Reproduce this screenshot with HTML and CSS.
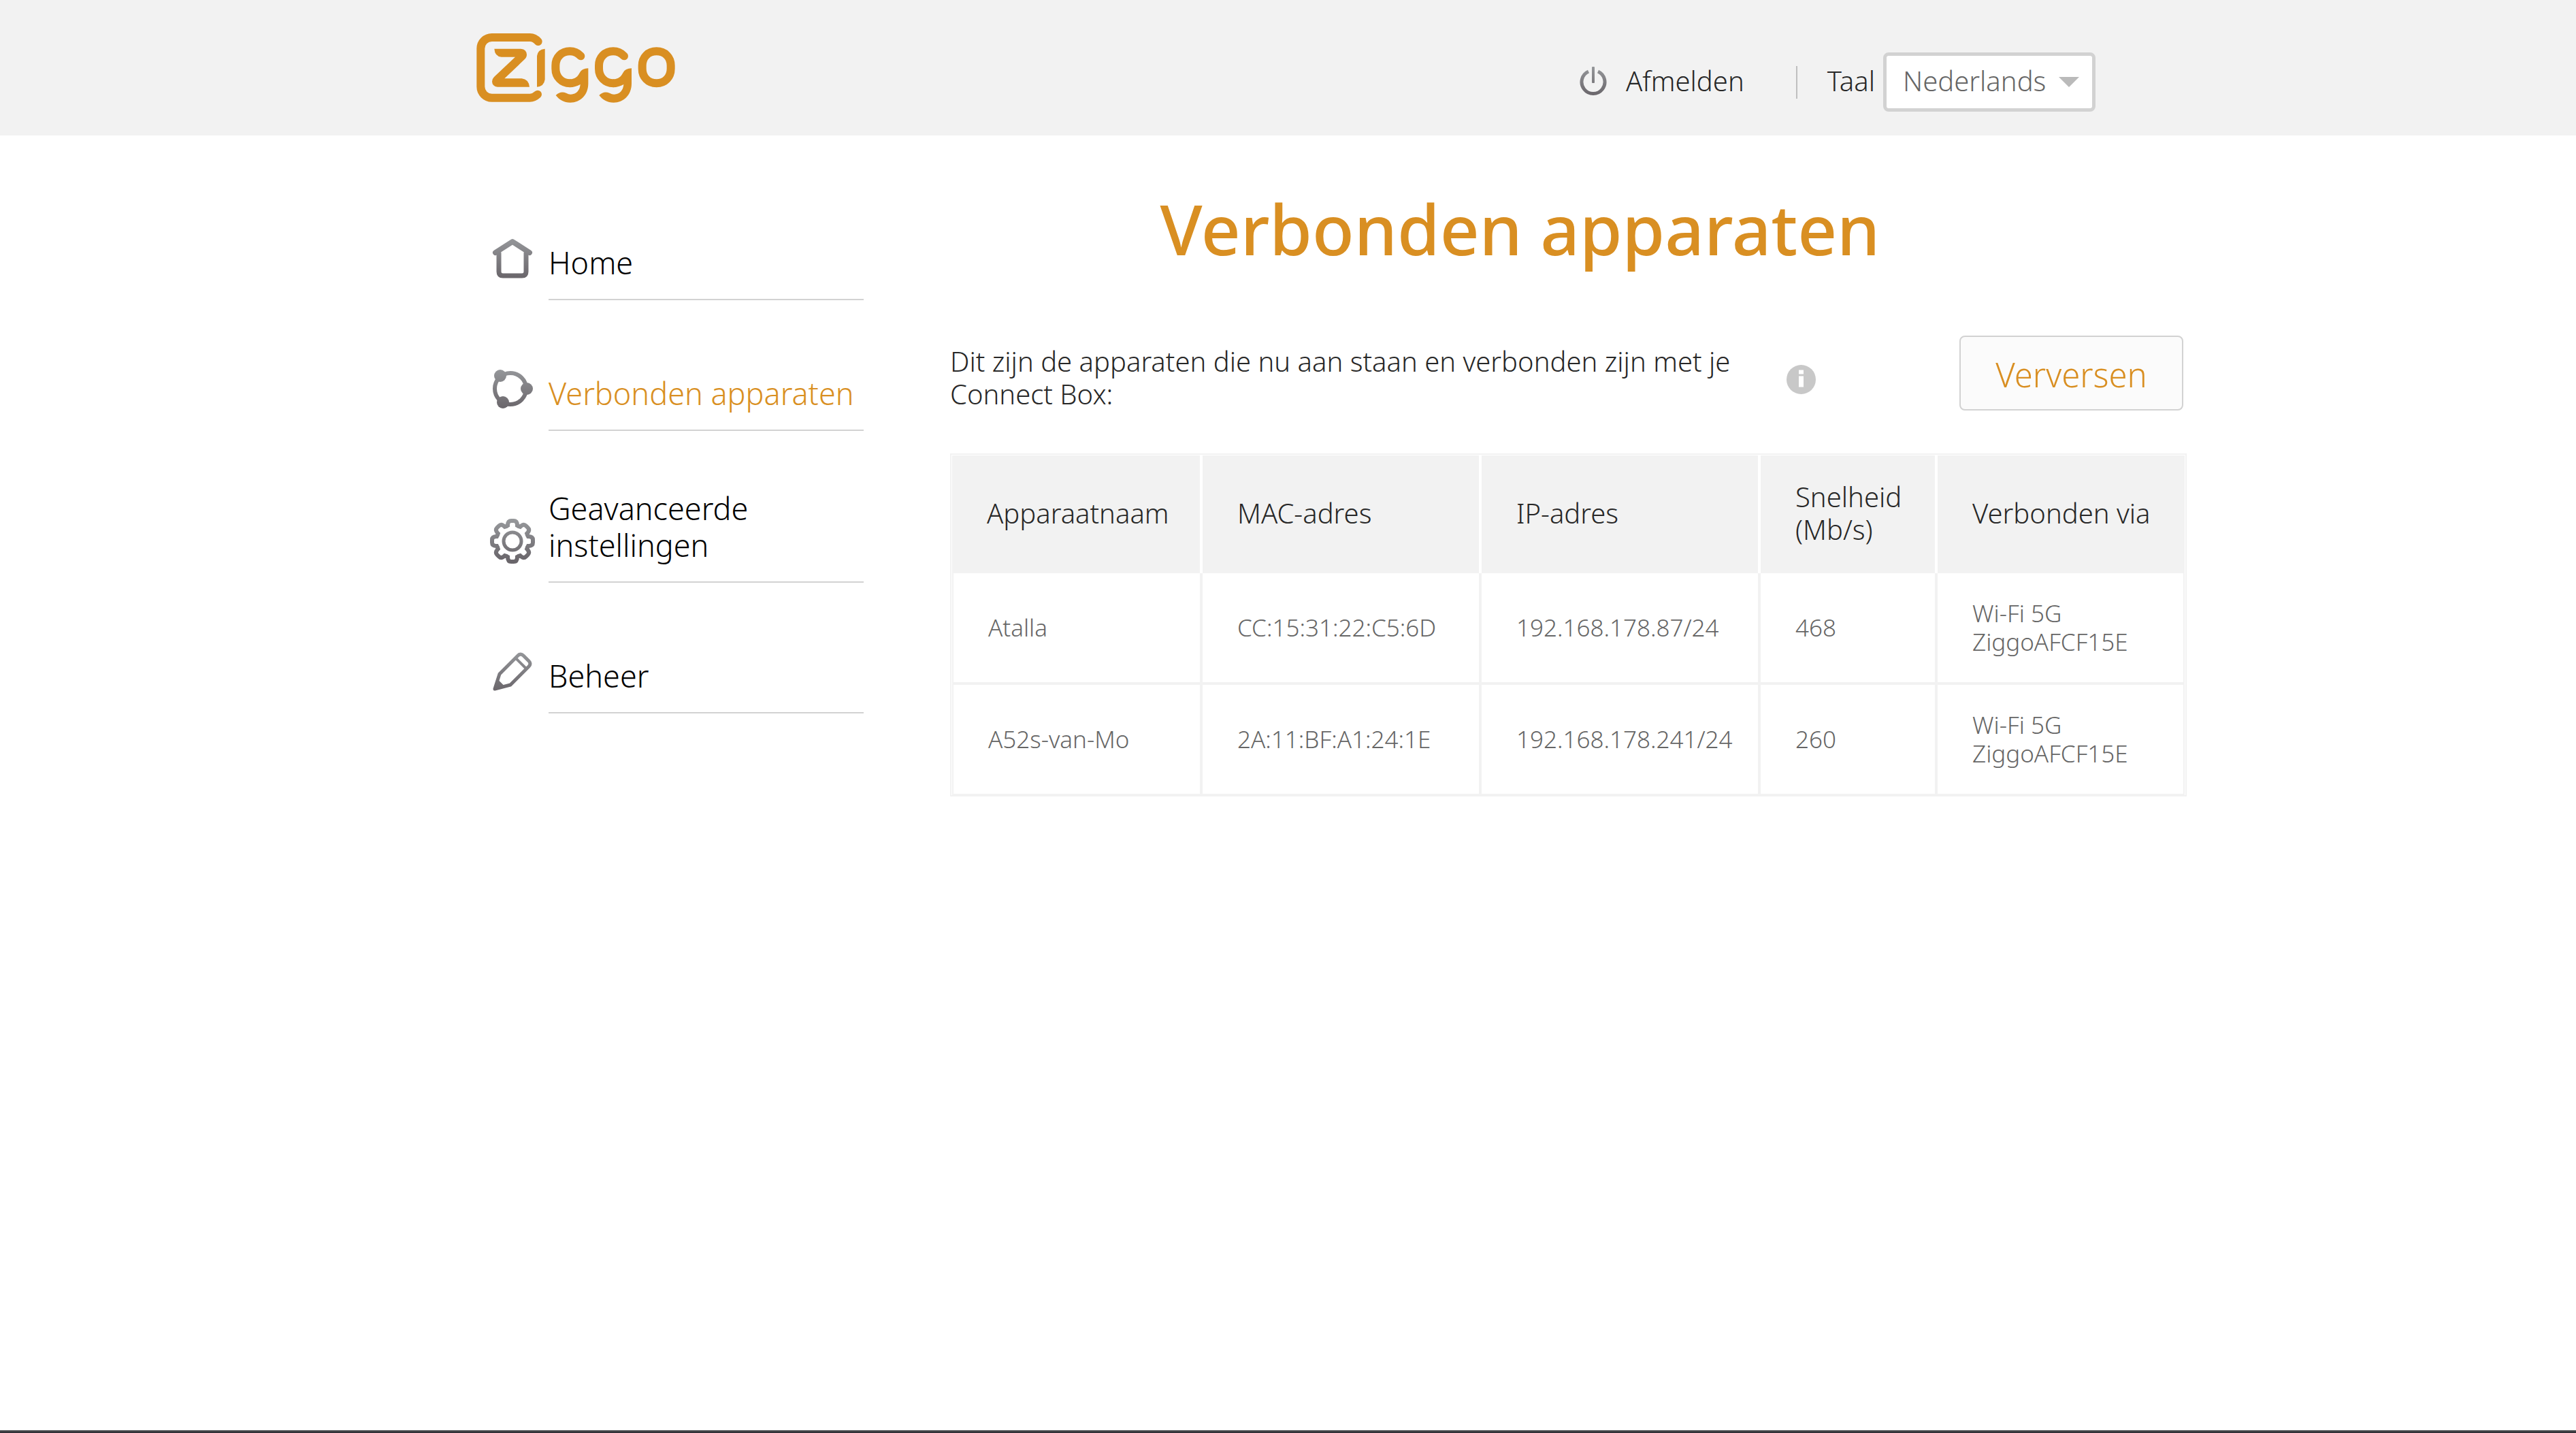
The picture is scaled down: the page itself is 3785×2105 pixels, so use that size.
FILE: index.html
```html
<!DOCTYPE html>
<html lang="nl">
<head>
<meta charset="utf-8">
<meta name="viewport" content="width=device-width, initial-scale=1">
<title>Verbonden apparaten - Ziggo</title>
<link rel="stylesheet" href="styles.css">
</head>
<body>
<svg class="defs" width="0" height="0" aria-hidden="true">
  <defs>
    <linearGradient id="metal" gradientUnits="userSpaceOnUse" x1="0" y1="2" x2="0" y2="62">
      <stop offset="0" stop-color="#96989b"/>
      <stop offset="1" stop-color="#69656a"/>
    </linearGradient>
    <linearGradient id="metal-small" gradientUnits="userSpaceOnUse" x1="0" y1="0" x2="0" y2="44">
      <stop offset="0" stop-color="#96989b"/>
      <stop offset="1" stop-color="#69656a"/>
    </linearGradient>
    <path id="tooth" d="M-9 -22L-7 -23Q-7 -30 -2 -30H2Q7 -30 7 -23L9 -22"/>
    <mask id="gear" maskUnits="userSpaceOnUse" x="0" y="0" width="66" height="66">
      <g transform="translate(33 33)" fill="none" stroke="#fff" stroke-width="6" stroke-linecap="round">
        <use href="#tooth"/>
        <use href="#tooth" transform="rotate(45)"/>
        <use href="#tooth" transform="rotate(90)"/>
        <use href="#tooth" transform="rotate(135)"/>
        <use href="#tooth" transform="rotate(180)"/>
        <use href="#tooth" transform="rotate(225)"/>
        <use href="#tooth" transform="rotate(270)"/>
        <use href="#tooth" transform="rotate(315)"/>
        <circle r="13" stroke-width="5"/>
      </g>
    </mask>
  </defs>
</svg>

<header class="site-header">
  <div class="container header-inner">
    <a class="logo" href="#" aria-label="Ziggo">
      <svg width="292" height="102" viewBox="60 54 876 306" fill="#d98f22" aria-hidden="true">
        <g fill="none" stroke="#d98f22" stroke-width="36" stroke-linecap="round">
          <path d="M332 90Q316 72 296 72H128A49 49 0 0 0 79 121V289A49 49 0 0 0 128 338H296Q314 338 330 323"/>
          <path id="bowl" d="M520 154Q500 133 472 133C435 133 409 160 409 196V210C409 246 436 274 472 274"/>
          <use href="#bowl" x="191"/>
          <path d="M854 133C892 133 917 160 917 196V210C917 246 892 274 854 274C816 274 791 246 791 210V196C791 160 816 133 854 133Z"/>
        </g>
        <path d="M139 122H256Q281 124 282 148Q282 160 272 169L184 253H260Q290 256 294 290H153Q130 288 129 266Q129 255 138 246L231 158H170Q141 155 139 122Z"/>
        <path d="M362 122V257Q358 287 327 290V154Q330 125 362 122Z"/>
        <path id="tail" d="M553 208V275C553 325 518 359 474 359C446 359 425 347 410 327Q430 306 456 317Q466 323 476 323C501 322 516 305 518 279Q497 291 472 292V256C495 256 508 243 515 228Q525 208 553 208Z"/>
        <use href="#tail" x="191"/>
      </svg>
    </a>
    <div class="user-bar">
      <a class="logout" href="#">
        <svg width="40" height="44" viewBox="0 0 40 44" fill="none" stroke="url(#metal-small)" stroke-linecap="round" aria-hidden="true">
          <path d="M13 8A17 17 0 1 0 27 8" stroke-width="5" stroke-linecap="butt"/>
          <path d="M19 2L21 2L21 24L19 24Z" stroke-width="2" stroke-linejoin="round" fill="url(#metal-small)"/>
        </svg>
        <span class="bar-text">Afmelden</span>
      </a>
      <span class="divider"></span>
      <div class="language">
        <label class="bar-text" for="taal">Taal</label>
        <span class="select-wrap">
          <select id="taal"><option>Nederlands</option><option>English</option></select>
        </span>
      </div>
    </div>
  </div>
</header>

<main class="container layout">
  <nav class="side-nav" aria-label="Hoofdmenu">
    <a class="nav-item" href="#">
      <svg width="66" height="66" viewBox="0 0 66 66" fill="none" stroke="url(#metal)" stroke-width="6" stroke-linecap="round" stroke-linejoin="round" aria-hidden="true">
        <path d="M8 24L33 8L58 24" stroke-width="8"/>
        <path d="M13 25V52Q13 58 19 58H47Q53 58 53 52V25" stroke-width="7"/>
      </svg>
      <span class="nav-label">Home</span>
    </a>
    <a class="nav-item is-active" href="#" aria-current="page">
      <svg width="66" height="66" viewBox="0 0 66 66" fill="url(#metal)" aria-hidden="true">
        <circle cx="30" cy="32" r="23" fill="none" stroke="url(#metal)" stroke-width="6"/>
        <circle cx="15" cy="13" r="9"/>
        <circle cx="54" cy="32" r="9"/>
        <circle cx="19" cy="52" r="9"/>
      </svg>
      <span class="nav-label">Verbonden apparaten</span>
    </a>
    <a class="nav-item" href="#">
      <svg width="66" height="66" viewBox="0 0 66 66" aria-hidden="true">
        <rect width="66" height="66" fill="url(#metal)" mask="url(#gear)"/>
      </svg>
      <span class="nav-label">Geavanceerde<br>instellingen</span>
    </a>
    <a class="nav-item" href="#">
      <svg width="66" height="66" viewBox="0 0 66 66" fill="none" stroke="url(#metal)" stroke-width="5" stroke-linejoin="round" aria-hidden="true">
        <path d="M7 58L14 36L41 9Q45 5 49 9L57 17Q61 21 57 25L30 52Z"/>
        <path d="M38 13L53 28" stroke-width="4"/>
        <path d="M11 45L20 54L7 58Z" fill="url(#metal)" stroke-width="2"/>
      </svg>
      <span class="nav-label">Beheer</span>
    </a>
  </nav>

  <section class="content">
    <h1>Verbonden apparaten</h1>
    <div class="intro-row">
      <p class="intro">Dit zijn de apparaten die nu aan staan en verbonden zijn met je Connect Box:</p>
      <button class="info" type="button" aria-label="Informatie">
        <svg width="43" height="43" viewBox="0 0 86 86" aria-hidden="true">
          <circle cx="43" cy="43" r="43" fill="#c8c8c8"/>
          <path d="M36 15H50V27H36ZM36 33H50V65H36Z" fill="#fff"/>
        </svg>
      </button>
      <button class="refresh" type="button">Verversen</button>
    </div>
    <table class="devices">
      <colgroup>
        <col class="col-name"><col class="col-address"><col class="col-address"><col class="col-speed"><col>
      </colgroup>
      <thead>
        <tr>
          <th scope="col">Apparaatnaam</th>
          <th scope="col">MAC-adres</th>
          <th scope="col">IP-adres</th>
          <th scope="col">Snelheid (Mb/s)</th>
          <th scope="col">Verbonden via</th>
        </tr>
      </thead>
      <tbody>
        <tr>
          <td>Atalla</td>
          <td>CC:15:31:22:C5:6D</td>
          <td>192.168.178.87/24</td>
          <td>468</td>
          <td>Wi-Fi 5G ZiggoAFCF15E</td>
        </tr>
        <tr>
          <td>A52s-van-Mo</td>
          <td>2A:11:BF:A1:24:1E</td>
          <td>192.168.178.241/24</td>
          <td>260</td>
          <td>Wi-Fi 5G ZiggoAFCF15E</td>
        </tr>
      </tbody>
    </table>
  </section>
</main>

<footer class="site-footer"></footer>
</body>
</html>
```
FILE: styles.css
```css
*,
*::before,
*::after {
  box-sizing: border-box;
}

body {
  margin: 0;
  min-height: 100vh;
  display: flex;
  flex-direction: column;
  background: #fff;
  color: #272727;
  font-family: "Noto Sans", "Open Sans", sans-serif;
  font-weight: 300;
  font-size: 40px;
  line-height: 48px;
}

a {
  color: inherit;
  text-decoration: none;
}

button,
select {
  font: inherit;
}

.defs {
  position: absolute;
}

.container {
  width: 100%;
  max-width: 2385px;
  margin: 0 auto;
}

/* Header */

.site-header {
  background: #f2f2f2;
}

.header-inner {
  min-height: 199px;
  padding-right: 6px;
  display: flex;
  align-items: center;
  justify-content: space-between;
}

.logo svg {
  display: block;
}

.user-bar {
  display: flex;
  align-items: center;
  padding-top: 42px;
}

.logout {
  display: flex;
  align-items: center;
  gap: 28px;
}

.logout svg {
  margin-bottom: 4px;
}

.bar-text {
  padding-bottom: 4px;
}

.divider {
  width: 2px;
  height: 48px;
  margin: 0 44px 0 76px;
  background: #bfbfbf;
}

.language {
  display: flex;
  align-items: center;
  gap: 12px;
}

.select-wrap {
  position: relative;
}

.select-wrap::after {
  content: "";
  position: absolute;
  top: 36px;
  right: 24px;
  border: solid transparent;
  border-width: 15px 15px 0;
  border-top-color: #bababa;
  pointer-events: none;
}

.select-wrap select {
  display: block;
  width: 312px;
  height: 87px;
  padding: 0 60px 4px 24px;
  appearance: none;
  border: 5px solid #d2d2d2;
  border-radius: 8px;
  background: #fff;
  color: #666;
}

/* Page body */

.layout {
  flex: 1;
  display: flex;
  align-items: flex-start;
  gap: 127px;
  padding-left: 20px;
}

.side-nav {
  flex: none;
  width: 549px;
  padding-top: 135px;
  display: grid;
  gap: 85px;
  color: #000;
  font-size: 45px;
  line-height: 54px;
}

.nav-item {
  display: flex;
  align-items: flex-end;
  gap: 20px;
}

.nav-item svg {
  flex: none;
  margin-bottom: 28px;
}

.nav-label {
  flex: 1;
  min-height: 107px;
  padding: 2px 0 26px;
  border-bottom: 2px solid #d2d2d2;
  align-content: end;
  white-space: nowrap;
}

.is-active {
  color: #d98f22;
}

.content {
  flex: 1;
  margin-right: -128px;
  padding-top: 75px;
}

h1 {
  margin: 0 0 95px;
  padding-right: 142px;
  color: #d98f22;
  font-size: 101px;
  font-weight: 500;
  line-height: 124px;
  text-align: center;
}

.intro-row {
  display: flex;
  align-items: flex-start;
  margin-bottom: 63px;
  padding-right: 5px;
}

.intro {
  width: 1180px;
  margin: 14px 49px 0 0;
}

.info {
  margin-top: 43px;
  padding: 0;
  border: 0;
  background: none;
}

.info svg {
  display: block;
}

.refresh {
  width: 329px;
  height: 110px;
  margin-left: auto;
  padding: 4px 0 0;
  border: 2px solid #d2d2d2;
  border-radius: 8px;
  background: #fbfbfb;
  color: #d98f22;
  font-size: 49px;
}

/* Device table */

.devices {
  width: 100%;
  table-layout: fixed;
  border: 2px solid #f2f2f2;
  border-spacing: 0;
  padding: 1px 1px 0;
  text-align: left;
}

.col-name {
  width: 368px;
}

.col-address {
  width: 410px;
}

.col-speed {
  width: 260px;
}

.devices th {
  padding: 37px 36px 40px 51px;
  border-right: 4px solid #fff;
  background: #f2f2f2;
  font-weight: 300;
}

.devices td {
  padding: 38px 36px 38px 51px;
  border: solid #f2f2f2;
  border-width: 0 4px 4px 0;
  color: #666;
  font-size: 35px;
  line-height: 42px;
}

.devices th:last-child {
  border-right: 0;
}

.devices td:first-child {
  border-left-width: 2px;
}

.devices td:last-child {
  border-right-width: 2px;
}

.devices tr:last-child td {
  border-bottom-width: 2px;
}

.site-footer {
  height: 4px;
  border-bottom: 1px solid #2a2830;
  background: #404245;
}
```
